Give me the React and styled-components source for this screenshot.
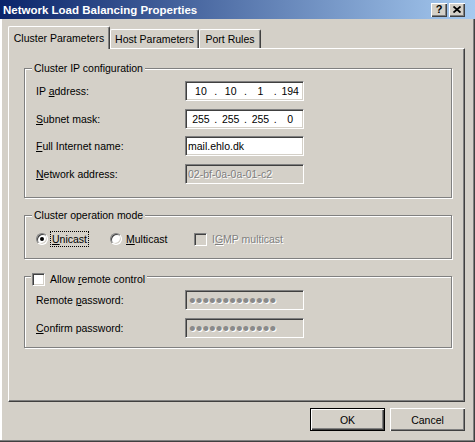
import React from "react";
import styled, { createGlobalStyle } from "styled-components";

const Global = createGlobalStyle`
  body {
    margin: 0;
    background: #d4d0c8;
    font-family: "Liberation Sans", Arial, sans-serif;
    font-size: 10.5px;
    color: #000;
  }
`;

const Window = styled.div`
  width: 475px;
  height: 442px;
  display: flex;
  flex-direction: column;
  background: #d4d0c8;
  overflow: hidden;
`;

const TitleBar = styled.div`
  height: 19px;
  flex: none;
  display: flex;
  align-items: center;
  padding: 0 10px 0 3px;
  background: linear-gradient(90deg, #0a246a 0%, #a6caf0 100%);
  color: #fff;
  font-weight: bold;
  font-size: 11.5px;
`;

const TitleText = styled.div`
  flex: 1;
  white-space: nowrap;
`;

const CaptionButton = styled.div`
  width: 16px;
  height: 14px;
  box-sizing: border-box;
  margin-left: ${(p) => p.$gap || 0}px;
  background: #d4d0c8;
  box-shadow: inset 1px 1px 0 #fff, inset -1px -1px 0 #404040,
    inset -2px -2px 0 #808080;
  display: flex;
  align-items: center;
  justify-content: center;
  color: #000;
  font-size: 11px;
  font-weight: bold;
  line-height: 1;
  padding-bottom: 1px;
`;

const Body = styled.div`
  flex: 1;
  display: flex;
  flex-direction: column;
  padding: 7px 10px 0 8px;
  box-shadow: inset -1px -1px 0 #404040, inset -2px -2px 0 #808080,
    inset 2px 0 0 #fff;
`;

const TabStrip = styled.div`
  display: flex;
  align-items: flex-end;
  height: 22px;
  position: relative;
  z-index: 1;
`;

const Tab = styled.div`
  width: ${(p) => p.$w}px;
  height: ${(p) => (p.$active ? 23 : 19)}px;
  margin-bottom: ${(p) => (p.$active ? -1 : 0)}px;
  box-sizing: border-box;
  background: #d4d0c8;
  border-top: 1px solid #fff;
  border-left: 1px solid #fff;
  border-right: 1px solid #404040;
  border-radius: 2px 2px 0 0;
  box-shadow: inset -1px 0 0 #808080;
  display: flex;
  align-items: center;
  justify-content: center;
  white-space: nowrap;
  padding-bottom: ${(p) => (p.$active ? 1 : 0)}px;
`;

const Panel = styled.div`
  height: 354px;
  flex: none;
  box-sizing: border-box;
  background: #d4d0c8;
  border-top: 1px solid #fff;
  border-left: 1px solid #fff;
  border-right: 1px solid #404040;
  border-bottom: 1px solid #404040;
  box-shadow: inset -1px -1px 0 #808080;
  padding: 19px 12px 0 15px;
  display: flex;
  flex-direction: column;
`;

const Group = styled.div`
  position: relative;
  box-sizing: border-box;
  height: ${(p) => p.$h}px;
  margin-top: ${(p) => p.$mt || 0}px;
  border: 1px solid #808080;
  box-shadow: inset 1px 1px 0 #fff, 1px 1px 0 #fff;
  padding: ${(p) => p.$pt}px 0 0 11px;
`;

const Legend = styled.div`
  position: absolute;
  top: ${(p) => p.$top}px;
  left: ${(p) => p.$left}px;
  padding: 0 2px 0 ${(p) => p.$pl ?? 2}px;
  background: #d4d0c8;
  line-height: 13px;
  height: ${(p) => p.$h || 13}px;
  display: flex;
  align-items: center;
  gap: 5px;
  white-space: nowrap;
`;

const FieldGrid = styled.div`
  display: grid;
  grid-template-columns: 149px 119px;
  grid-auto-rows: 20px;
  row-gap: ${(p) => p.$gap}px;
  align-items: center;
`;

const Label = styled.div`
  white-space: nowrap;
`;

const Field = styled.div`
  width: 119px;
  height: 20px;
  box-sizing: border-box;
  border: 1px solid;
  border-color: #808080 #fff #fff #808080;
  box-shadow: inset 1px 1px 0 #404040, inset -1px -1px 0 #d4d0c8;
  background: ${(p) => (p.$disabled ? "#d4d0c8" : "#fff")};
  display: flex;
  align-items: center;
  padding-left: ${(p) => p.$pl ?? 2}px;
  white-space: nowrap;
  overflow: hidden;
  color: ${(p) => (p.$disabled ? "#808080" : "#000")};
  text-shadow: ${(p) => (p.$disabled ? "1px 1px 0 #fff" : "none")};
`;

const Octet = styled.span`
  width: 26px;
  text-align: center;
`;

const Dot = styled.span`
  width: 4px;
  text-align: center;
`;

const Bullets = styled.span`
  font-size: 19px;
  letter-spacing: 0.05px;
  line-height: 1;
  padding-top: 1px;
  color: #8a8a8a;
  text-shadow: 1px 1px 0 #fff;
`;

const OptionRow = styled.div`
  display: flex;
  align-items: center;
  height: 16px;
`;

const Option = styled.div`
  width: ${(p) => p.$w}px;
  display: flex;
  align-items: center;
  flex: none;
  white-space: nowrap;
  color: ${(p) => (p.$disabled ? "#808080" : "#000")};
  text-shadow: ${(p) => (p.$disabled ? "1px 1px 0 #fff" : "none")};
`;

const Radio = styled.span`
  width: 12px;
  height: 12px;
  box-sizing: border-box;
  border-radius: 50%;
  border: 1px solid;
  border-color: #808080 #fff #fff #808080;
  box-shadow: inset 1px 1px 0 #404040, inset -1px -1px 0 #d4d0c8;
  background: #fff;
  position: relative;
  flex: none;
  margin-right: ${(p) => p.$mr}px;

  &::after {
    content: "";
    display: ${(p) => (p.$checked ? "block" : "none")};
    position: absolute;
    left: 3px;
    top: 3px;
    width: 4px;
    height: 4px;
    border-radius: 50%;
    background: #000;
  }
`;

const Check = styled.span`
  width: 13px;
  height: 13px;
  box-sizing: border-box;
  flex: none;
  border: 1px solid;
  border-color: #808080 #fff #fff #808080;
  box-shadow: inset 1px 1px 0 #404040, inset -1px -1px 0 #d4d0c8;
  background: ${(p) => (p.$disabled ? "#d4d0c8" : "#fff")};
  margin-right: ${(p) => p.$mr || 0}px;
`;

const Focus = styled.span`
  outline: 1px dotted #000;
  outline-offset: 0;
  padding: 1px 1px 1px 1px;
  line-height: 12px;
`;

const ButtonRow = styled.div`
  display: flex;
  justify-content: flex-end;
  gap: 5px;
  margin-top: 6px;
`;

const Button = styled.div`
  width: 75px;
  height: 23px;
  box-sizing: border-box;
  display: flex;
  align-items: center;
  justify-content: center;
  background: #d4d0c8;
  border: ${(p) => (p.$default ? "1px solid #000" : "none")};
  box-shadow: inset 1px 1px 0 #fff, inset -1px -1px 0 #404040,
    inset -2px -2px 0 #808080;
`;

const CloseGlyph = () => (
  <svg width="8" height="7" viewBox="0 0 8 7">
    <path d="M0.5 0.5 L7.5 6.5 M7.5 0.5 L0.5 6.5" stroke="#000" strokeWidth="1.8" />
  </svg>
);

const IpField = ({ parts }) => (
  <Field $pl={2}>
    {parts.map((p, i) => (
      <React.Fragment key={i}>
        {i > 0 && <Dot>.</Dot>}
        <Octet>{p}</Octet>
      </React.Fragment>
    ))}
  </Field>
);

export default function App() {
  return (
    <>
      <Global />
      <Window>
        <TitleBar>
          <TitleText>Network Load Balancing Properties</TitleText>
          <CaptionButton>?</CaptionButton>
          <CaptionButton $gap={2}>
            <CloseGlyph />
          </CaptionButton>
        </TitleBar>
        <Body>
          <TabStrip>
            <Tab $w={102} $active>Cluster Parameters</Tab>
            <Tab $w={89}>Host Parameters</Tab>
            <Tab $w={62}>Port Rules</Tab>
          </TabStrip>
          <Panel>
            <Group $h={130} $pt={12}>
              <Legend $top={-7} $left={7}>Cluster IP configuration</Legend>
              <FieldGrid $gap={7.5}>
                <Label>IP <u>a</u>ddress:</Label>
                <IpField parts={["10", "10", "1", "194"]} />
                <Label><u>S</u>ubnet mask:</Label>
                <IpField parts={["255", "255", "255", "0"]} />
                <Label><u>F</u>ull Internet name:</Label>
                <Field>mail.ehlo.dk</Field>
                <Label><u>N</u>etwork address:</Label>
                <Field $disabled>02-bf-0a-0a-01-c2</Field>
              </FieldGrid>
            </Group>

            <Group $h={44} $pt={15} $mt={17}>
              <Legend $top={-7} $left={7}>Cluster operation mode</Legend>
              <OptionRow>
                <Option $w={74}>
                  <Radio $checked $mr={3} />
                  <Focus><u>U</u>nicast</Focus>
                </Option>
                <Option $w={84}>
                  <Radio $mr={4} />
                  <span><u>M</u>ulticast</span>
                </Option>
                <Option $w={120} $disabled>
                  <Check $disabled $mr={5} />
                  <span>I<u>G</u>MP multicast</span>
                </Option>
              </OptionRow>
            </Group>

            <Group $h={72} $pt={13} $mt={17}>
              <Legend $top={-5} $left={6} $pl={1} $h={15}>
                <Check />
                <span>Allow <u>r</u>emote control</span>
              </Legend>
              <FieldGrid $gap={8}>
                <Label>Remote <u>p</u>assword:</Label>
                <Field $disabled $pl={3}>
                  <Bullets>•••••••••••••</Bullets>
                </Field>
                <Label><u>C</u>onfirm password:</Label>
                <Field $disabled $pl={3}>
                  <Bullets>•••••••••••••</Bullets>
                </Field>
              </FieldGrid>
            </Group>
          </Panel>
          <ButtonRow>
            <Button $default>OK</Button>
            <Button>Cancel</Button>
          </ButtonRow>
        </Body>
      </Window>
    </>
  );
}
